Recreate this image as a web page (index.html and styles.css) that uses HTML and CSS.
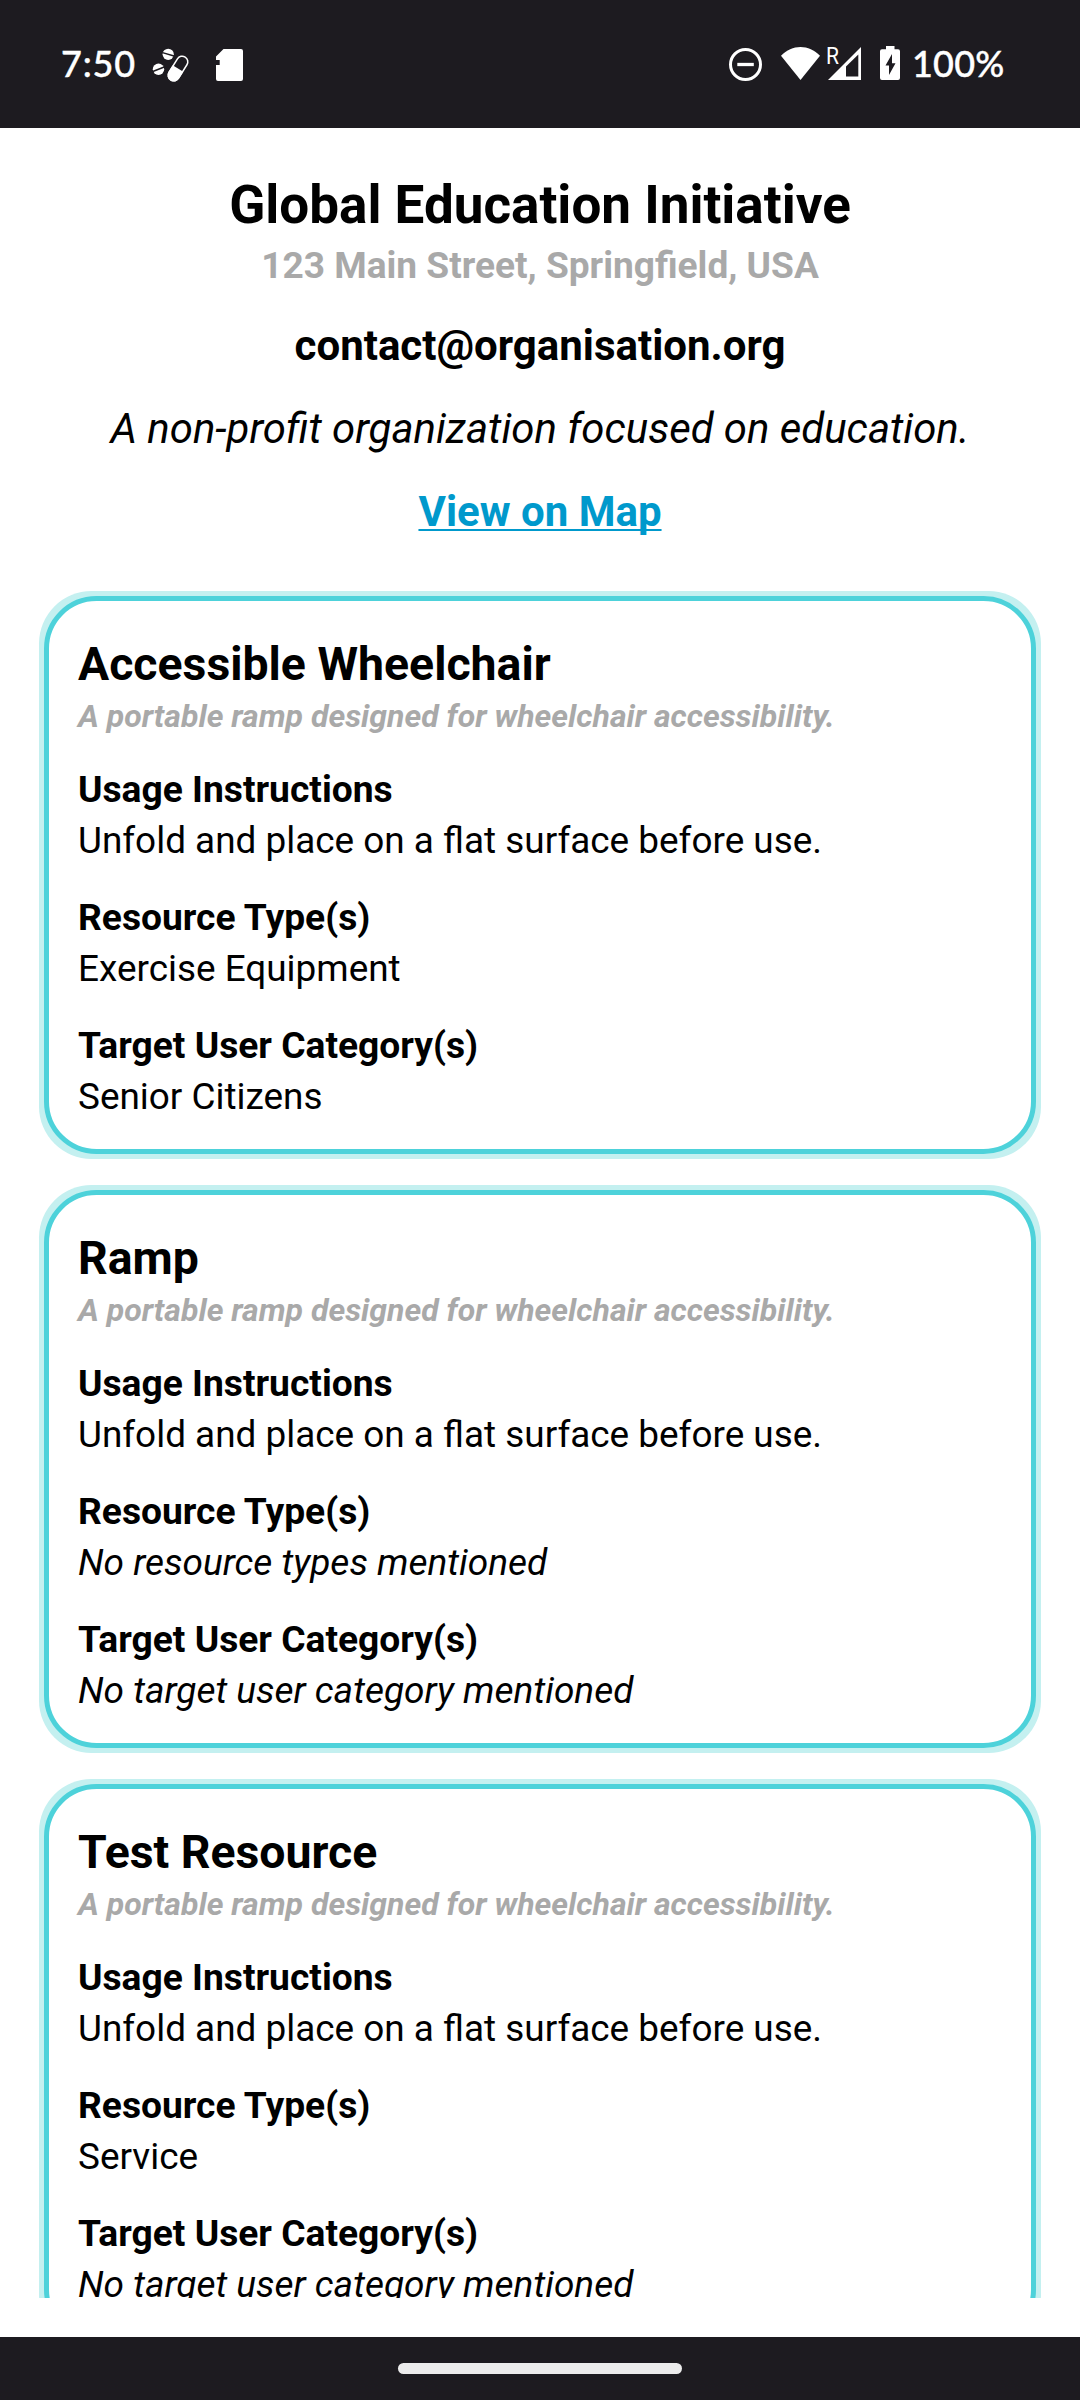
FILE: index.html
```html
<!DOCTYPE html>
<html lang="en">
<head>
<meta charset="utf-8">
<title>Global Education Initiative</title>
<link rel="stylesheet" href="styles.css">
</head>
<body>
<div class="screen">
  <div class="status">
    <span class="clock">7:50</span>
    <svg class="pills" width="38" height="38" viewBox="0 0 38 38">
      <circle cx="16.2" cy="7.3" r="5.6" fill="#fff"/><path d="M10.5 5.6 22 9" stroke="#1d1b20" stroke-width="1.5"/>
      <circle cx="6.5" cy="22.3" r="5.7" fill="#fff"/><path d="M.8 24.5 12.2 20" stroke="#1d1b20" stroke-width="1.5"/>
      <g transform="translate(26 21.500) rotate(32)"><rect x="-5.6" y="-13.500" width="11.2" height="27" rx="5.6" fill="none" stroke="#fff" stroke-width="1.5"/><path d="M-6.3 0H6.3V8a6.3 6.3 0 0 1-12.6 0Z" fill="#fff"/></g>
    </svg>
    <svg class="sd" width="28" height="33" viewBox="0 0 28 33"><path d="M7.5 0H25q2 0 2 2V30q0 2-2 2H2q-2 0-2-2V16H3.700V11H0V7.500Z" fill="#fff"/></svg>
    <span class="fill"></span>
    <svg class="dnd" width="34" height="34" viewBox="0 0 34 34"><circle cx="16.500" cy="17.500" r="15" fill="none" stroke="#fff" stroke-width="3"/><path d="M8.300 17.500h16.500" stroke="#fff" stroke-width="3.300"/></svg>
    <svg class="wifi" width="40" height="33" viewBox="0 0 40 33"><path d="M0 8.700C11-2.900 28-2.900 39 8.700L19.500 33Z" fill="#fff"/></svg>
    <svg class="signal" width="35" height="36" viewBox="0 0 35 36"><path d="M1 34 34 1V34Z" fill="#fff"/><path d="M19 20.500 31.300 8.500V30.500H19Z" fill="#1d1b20"/><text x="-1" y="18" class="roam" textLength="13" lengthAdjust="spacingAndGlyphs">R</text></svg>
    <svg class="battery" width="21" height="34" viewBox="0 0 21 34"><path d="M6 0h8.500v3.300H18q2 0 2 2V32q0 2-2 2H2q-2 0-2-2V5.300q0-2 2-2H6Z" fill="#fff"/><path d="M12 8 5.500 19.500H9V29L15.500 17.300H12Z" fill="#1d1b20"/></svg>
    <span class="percent">100%</span>
  </div>
  <main class="content">
    <header class="org">
      <h1>Global Education Initiative</h1>
      <p class="address">123 Main Street, Springfield, USA</p>
      <p class="email">contact@organisation.org</p>
      <p class="about">A non-profit organization focused on education.</p>
      <a class="map">View on Map</a>
    </header>
    <section class="cards">
      <article class="card"><div class="inner">
        <h2>Accessible Wheelchair</h2>
        <p class="desc">A portable ramp designed for wheelchair accessibility.</p>
        <h3>Usage Instructions</h3><p>Unfold and place on a flat surface before use.</p>
        <h3>Resource Type(s)</h3><p>Exercise Equipment</p>
        <h3>Target User Category(s)</h3><p>Senior Citizens</p>
      </div></article>
      <article class="card"><div class="inner">
        <h2>Ramp</h2>
        <p class="desc">A portable ramp designed for wheelchair accessibility.</p>
        <h3>Usage Instructions</h3><p>Unfold and place on a flat surface before use.</p>
        <h3>Resource Type(s)</h3><p class="none">No resource types mentioned</p>
        <h3>Target User Category(s)</h3><p class="none">No target user category mentioned</p>
      </div></article>
      <article class="card"><div class="inner">
        <h2>Test Resource</h2>
        <p class="desc">A portable ramp designed for wheelchair accessibility.</p>
        <h3>Usage Instructions</h3><p>Unfold and place on a flat surface before use.</p>
        <h3>Resource Type(s)</h3><p>Service</p>
        <h3>Target User Category(s)</h3><p class="none">No target user category mentioned</p>
      </div></article>
    </section>
  </main>
  <div class="nav"><span class="handle"></span></div>
</div>
</body>
</html>
```
FILE: styles.css
```css
* { box-sizing: border-box; margin: 0; padding: 0; }
body { background: #fff; color: #000; font-family: Roboto, sans-serif; }
.screen { width: 1080px; height: 2400px; display: flex; flex-direction: column; overflow: hidden; }

.status { height: 128px; flex: none; background: #1d1b20; color: #fff; display: flex; align-items: flex-start; padding: 46px 76px 0 61px; }
.status svg { flex: none; display: block; overflow: visible; }
.clock, .percent { font: 500 36px/34px Lato, sans-serif; white-space: nowrap; -webkit-text-stroke: 0.4px #fff; }
.clock { width: 91px; letter-spacing: 0.8px; }
.percent { width: 92px; letter-spacing: 0.2px; }
.pills { margin-top: 1px; }
.sd { margin: 3px 0 0 26px; }
.fill { flex: 1; }
.dnd { margin: 1px 18px 0 0; }
.wifi { margin: 1px 6px 0 0; }
.signal { margin-right: 18px; }
.battery { margin-right: 11px; }
.roam { font: 400 23px Roboto, sans-serif; fill: #fff; }

.content { height: 2170px; flex: none; overflow: hidden; padding: 46px 39px 0; }
.org { display: flex; flex-direction: column; align-items: center; white-space: nowrap; }
h1 { font-size: 53px; line-height: 62px; font-weight: 700; }
.address { margin-top: 8px; font-size: 37.1px; line-height: 43px; font-weight: 700; color: #a9a9a9; }
.email, .about, .map { margin-top: 34px; font-size: 42px; line-height: 49px; font-weight: 700; }
.about { font-size: 41.9px; font-weight: 400; font-style: italic; }
.map { color: #0099cc; text-decoration: underline; text-decoration-thickness: 2px; text-underline-offset: 3px; text-decoration-skip-ink: none; }

.cards { display: flex; flex-direction: column; gap: 26px; margin-top: 55px; }
.card { height: 568px; flex: none; padding: 5px; border-radius: 52.5px; background: #c4f0f0; }
.inner { height: 558px; padding: 36px 29px 0; border: 5px solid #4dd2da; border-radius: 52.5px; background: #fff; font-size: 36.9px; line-height: 43px; }
h2 { font-size: 46.4px; line-height: 55px; font-weight: 700; }
.desc { margin: 6px 0 33px; font-size: 32px; line-height: 37px; font-weight: 700; font-style: italic; color: #a9a9a9; }
h3 { font-size: 37.2px; line-height: 43px; font-weight: 700; margin-bottom: 8px; }
p + h3 { margin-top: 34px; }
.desc + h3 { margin-top: 0; }
.none { font-size: 37px; font-style: italic; }

.nav { flex: none; height: 63px; margin-top: 39px; background: #1d1b20; display: flex; justify-content: center; padding-top: 26px; }
.handle { width: 284px; height: 11px; border-radius: 5.5px; background: #ececec; }
```
